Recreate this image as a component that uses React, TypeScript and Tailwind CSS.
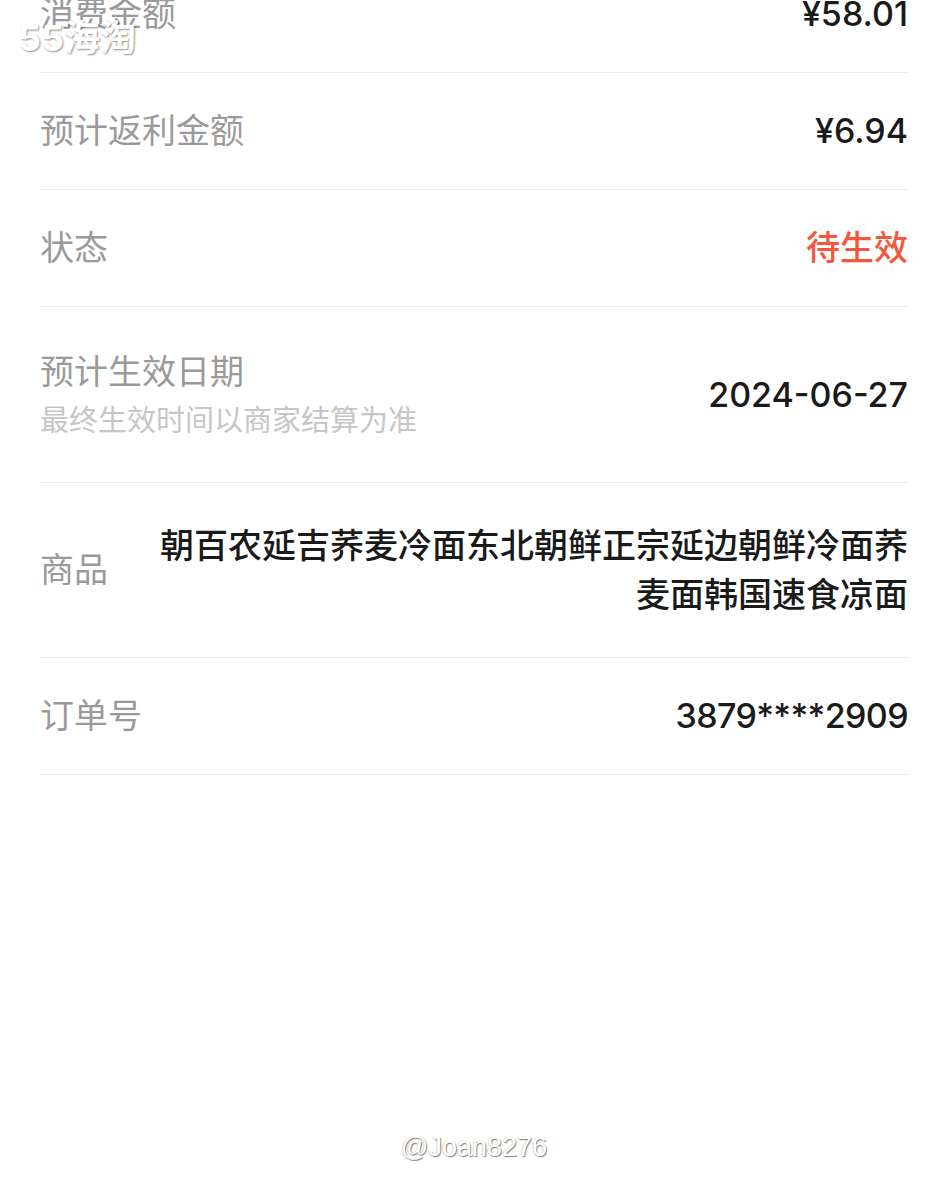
import { ReactNode } from 'react';

const FONT = '"Inter", "Noto Sans CJK SC", sans-serif';

interface IRow {
  label: ReactNode;
  children: ReactNode;
  className?: string;
}

function Row({ label, children, className }: IRow) {
  return (
    <div
      className={`flex items-center justify-between border-b border-[#ececec] ${className ?? 'py-[34px]'}`}
    >
      <div className="shrink-0">{label}</div>
      {children}
    </div>
  );
}

const labelCls = 'text-[34px] leading-[48px] text-[#9a9a9a]';
const valueCls = 'text-[34px] font-medium leading-[48px] text-[#1a1a1a]';

export default function App() {
  return (
    <div
      className="relative min-h-[1186px] w-[948px] overflow-hidden bg-white"
      style={{ fontFamily: FONT }}
    >
      <div className="-mt-[44px] px-10">
        <Row label={<span className={labelCls}>消费金额</span>}>
          <span className={valueCls}>¥58.01</span>
        </Row>
        <Row label={<span className={labelCls}>预计返利金额</span>}>
          <span className={valueCls}>¥6.94</span>
        </Row>
        <Row label={<span className={labelCls}>状态</span>}>
          <span className="text-[34px] font-medium leading-[48px] text-[#f4573b]">待生效</span>
        </Row>
        <Row
          className="py-[41px]"
          label={
            <div className="flex flex-col">
              <span className={labelCls}>预计生效日期</span>
              <span className="mt-[5px] text-[29px] leading-[40px] text-[#c6c6c6]">
                最终生效时间以商家结算为准
              </span>
            </div>
          }
        >
          <span className={valueCls}>2024-06-27</span>
        </Row>
        <Row className="py-[38px]" label={<span className={labelCls}>商品</span>}>
          <span className="ml-12 flex-1 text-right text-[34px] font-medium leading-[49px] text-[#1a1a1a]">
            朝百农延吉荞麦冷面东北朝鲜正宗延边朝鲜冷面荞麦面韩国速食凉面
          </span>
        </Row>
        <Row label={<span className={labelCls}>订单号</span>}>
          <span className={`${valueCls} tracking-[-0.6px]`}>3879****2909</span>
        </Row>
      </div>

      {/* watermarks */}
      <div
        className="absolute left-[18px] top-[16px] text-[36px] font-bold leading-[44px] text-white"
        style={{ textShadow: '1px 1px 2px rgba(0,0,0,0.45)' }}
      >
        55海淘
      </div>
      <div
        className="absolute left-0 right-0 top-[1130px] text-center text-[27px] leading-[34px] text-white"
        style={{
          fontFamily: '"Liberation Sans", sans-serif',
          textShadow: '1px 1px 1px rgba(0,0,0,0.5), -1px 0 1px rgba(0,0,0,0.15)',
        }}
      >
        @Joan8276
      </div>
    </div>
  );
}
